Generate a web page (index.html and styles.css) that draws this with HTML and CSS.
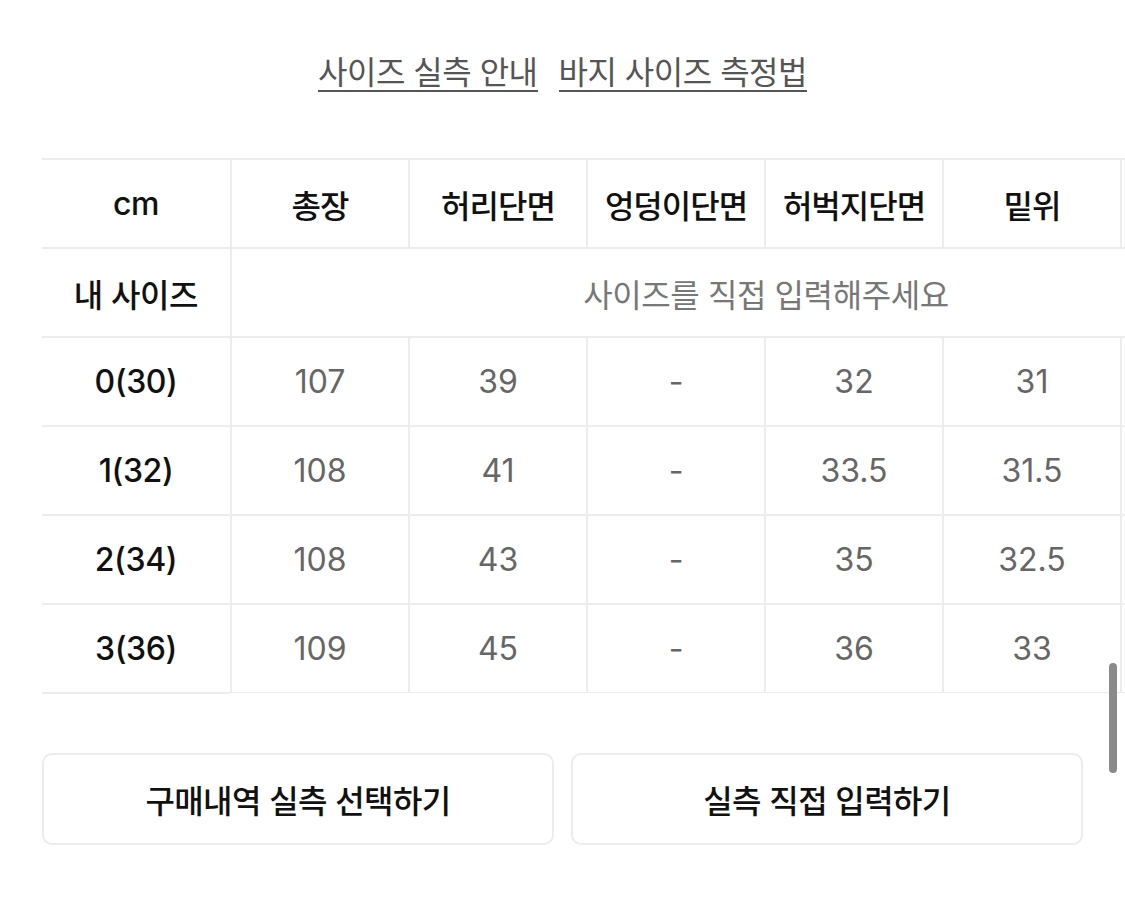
FILE: index.html
```html
<!DOCTYPE html>
<html lang="ko">
<head>
<meta charset="utf-8">
<link rel="stylesheet" href="styles.css">
</head>
<body>
<div class="page">
  <div class="links">
    <a class="link">사이즈 실측 안내</a>
    <a class="link">바지 사이즈 측정법</a>
  </div>
  <div class="table">
    <div class="fixed">
      <div class="fcell">cm</div>
      <div class="fcell">내 사이즈</div>
      <div class="fcell">0(30)</div>
      <div class="fcell">1(32)</div>
      <div class="fcell">2(34)</div>
      <div class="fcell">3(36)</div>
    </div>
    <div class="scroll">
      <div class="grid">
        <div class="cell head">총장</div>
        <div class="cell head">허리단면</div>
        <div class="cell head">엉덩이단면</div>
        <div class="cell head">허벅지단면</div>
        <div class="cell head">밑위</div>
        <div class="cell head"></div>
        <div class="cell span">사이즈를 직접 입력해주세요</div>
        <div class="cell">107</div><div class="cell">39</div><div class="cell">-</div><div class="cell">32</div><div class="cell">31</div><div class="cell"></div>
        <div class="cell">108</div><div class="cell">41</div><div class="cell">-</div><div class="cell">33.5</div><div class="cell">31.5</div><div class="cell"></div>
        <div class="cell">108</div><div class="cell">43</div><div class="cell">-</div><div class="cell">35</div><div class="cell">32.5</div><div class="cell"></div>
        <div class="cell">109</div><div class="cell">45</div><div class="cell">-</div><div class="cell">36</div><div class="cell">33</div><div class="cell"></div>
      </div>
    </div>
    <div class="scrollbar"></div>
  </div>
  <div class="buttons">
    <button class="btn">구매내역 실측 선택하기</button>
    <button class="btn">실측 직접 입력하기</button>
  </div>
</div>
</body>
</html>
```

FILE: styles.css
```css
* { box-sizing: border-box; }
html, body { margin: 0; padding: 0; background: #fff; }
body {
  font-family: Inter, "Noto Sans CJK KR", sans-serif;
  color: #111;
  width: 1125px;
  height: 904px;
  overflow: hidden;
}
.page {
  padding-top: 50px;
  padding-left: 42px;
}
.links {
  display: flex;
  justify-content: center;
  gap: 21px;
  margin-left: -42px;
  height: 108px;
}
.link {
  font-family: "Noto Sans CJK KR", sans-serif;
  font-size: 32px;
  color: #555;
  line-height: 40px;
  height: 42px;
  border-bottom: 2px solid #555;
  letter-spacing: -0.5px;
}
.table {
  position: relative;
  display: flex;
  height: 535px;
}
.fixed {
  width: 190px;
  flex: none;
  border-right: 2px solid #ededed;
  border-top: 2px solid #ededed;
}
.fcell {
  height: 89px;
  border-bottom: 2px solid #ededed;
  display: flex;
  align-items: center;
  justify-content: center;
  font-size: 32px;
  font-weight: 500;
  color: #111;
  letter-spacing: -0.4px;
}
.scroll {
  flex: 1;
  overflow: hidden;
}
.grid {
  width: 1068px;
  display: grid;
  grid-template-columns: repeat(6, 178px);
  grid-auto-rows: 89px;
  border-top: 2px solid #ededed;
}
.cell {
  border-right: 2px solid #ededed;
  border-bottom: 2px solid #ededed;
  display: flex;
  align-items: center;
  justify-content: center;
  font-size: 32px;
  color: #666;
}
.cell.head {
  color: #111;
  font-weight: 500;
  letter-spacing: -1px;
}
.cell.span {
  grid-column: 1 / -1;
  border-right: none;
  font-family: "Noto Sans CJK KR", sans-serif;
  font-size: 32px;
  color: #777;
  letter-spacing: -0.4px;
}
.scrollbar {
  position: absolute;
  left: 1067px;
  top: 505px;
  width: 8px;
  height: 110px;
  border-radius: 4px;
  background: #8a8a8a;
}
.buttons {
  display: flex;
  gap: 17px;
  margin-top: 60px;
}
.btn {
  width: 512px;
  height: 92px;
  background: #fff;
  border: 2px solid #ececec;
  border-radius: 10px;
  font-family: "Noto Sans CJK KR", sans-serif;
  font-size: 32px;
  font-weight: 500;
  color: #111;
  letter-spacing: -0.6px;
}
```
